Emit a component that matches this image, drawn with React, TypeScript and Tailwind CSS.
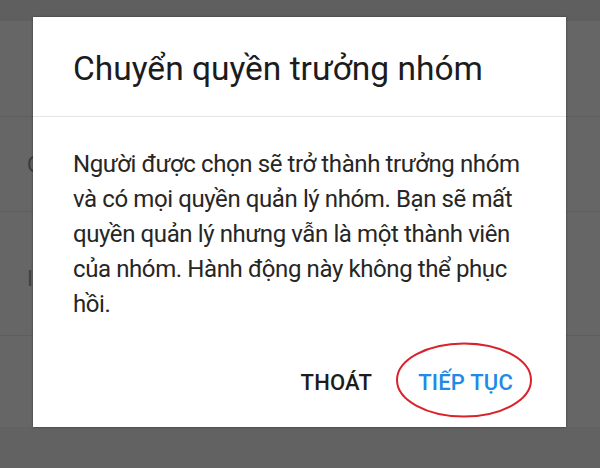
import React from "react";

const font = { fontFamily: "Roboto, 'Noto Sans', Arial, sans-serif" };

const bodyLines = [
  "Người được chọn sẽ trở thành trưởng nhóm",
  "và có mọi quyền quản lý nhóm. Bạn sẽ mất",
  "quyền quản lý nhưng vẫn là một thành viên",
  "của nhóm. Hành động này không thể phục",
  "hồi.",
];

function BackgroundList() {
  // Settings list behind the dimmed overlay
  return (
    <div className="flex h-[468px] w-[600px] flex-col bg-[#666666]">
      <div className="h-[21px] bg-[#5f5f5f]" />
      <div className="h-[96px] border-b border-[#5d5d5d]" />
      <div className="flex h-[95px] items-center border-b border-[#5d5d5d] pl-[27px] text-[22px] text-[#3a3a3a]">
        C
      </div>
      <div className="flex h-[124px] items-center border-b border-[#5d5d5d] pl-[27px] pt-[10px] text-[22px] text-[#3f3f3f]">
        I
      </div>
      <div className="h-[91px]" />
      <div className="flex-1 bg-[#626262]" />
    </div>
  );
}

export default function App() {
  return (
    <div className="relative h-[468px] w-[600px] overflow-hidden" style={font}>
      <BackgroundList />

      {/* Dialog layer */}
      <div className="absolute inset-0 pl-[33px] pt-[17px]">
        <div className="flex h-[410px] w-[533px] flex-col bg-white shadow-[0_0_2px_rgba(0,0,0,0.45)]">
          <div className="h-[100px] border-b border-[#e6e6e6] pl-[40px] pt-[34px]">
            <h1 className="text-[33.5px] leading-[35px] font-normal text-[#1c1c1c]">
              Chuyển quyền trưởng nhóm
            </h1>
          </div>

          <div className="pl-[40px] pr-[10px] pt-[30px]">
            <p className="text-[24px] leading-[35px] tracking-[-0.4px] text-[#262626]">
              {bodyLines.map((line) => (
                <span key={line} className="block whitespace-nowrap">
                  {line}
                </span>
              ))}
            </p>
          </div>

          <div className="mt-auto flex items-center justify-end gap-[22px] pb-[20px] pr-[41px]">
            <button className="h-[48px] px-[12px] text-[22px] leading-[48px] font-medium tracking-[0.2px] text-[#1c1c1c]">
              THOÁT
            </button>
            <button className="relative h-[48px] px-[12px] text-[22px] leading-[48px] font-medium tracking-[0.2px] text-[#2189e6]">
              TIẾP TỤC
              <svg
                className="pointer-events-none absolute left-[-12px] top-[-17px]"
                width="140"
                height="78"
                viewBox="0 0 140 78"
              >
                <ellipse
                  cx="70"
                  cy="38"
                  rx="67"
                  ry="36.5"
                  fill="none"
                  stroke="#d9222c"
                  strokeWidth="2"
                />
              </svg>
            </button>
          </div>
        </div>
      </div>
    </div>
  );
}
